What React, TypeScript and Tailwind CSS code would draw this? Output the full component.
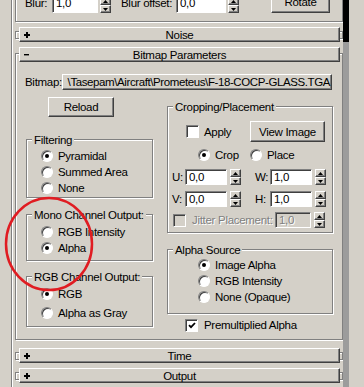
import React from 'react';

const raised =
  'border border-t-white border-l-white border-r-[#404040] border-b-[#404040] shadow-[inset_-1px_-1px_0_#808080]';
const sunken =
  'border border-t-[#808080] border-l-[#808080] border-r-white border-b-white shadow-[inset_1px_1px_0_#404040]';
const etched = 'border border-[#808080] shadow-[inset_1px_1px_0_#fff,1px_1px_0_#fff]';
const disabledText = 'text-[#808080] [text-shadow:1px_1px_0_#fff]';

const Spinner = () => (
  <div className="flex flex-col w-[11px] h-[16px] shrink-0">
    <div className={`h-[8px] flex items-center justify-center bg-[#d4d0c8] ${raised}`}>
      <svg width="5" height="3" viewBox="0 0 5 3">
        <path d="M2.5 0L5 3H0Z" fill="#000" />
      </svg>
    </div>
    <div className={`h-[8px] flex items-center justify-center bg-[#d4d0c8] ${raised}`}>
      <svg width="5" height="3" viewBox="0 0 5 3">
        <path d="M0 0H5L2.5 3Z" fill="#000" />
      </svg>
    </div>
  </div>
);

const Field = ({
  value,
  w,
  h = 'h-[16px] items-center',
  disabled,
}: {
  value: string;
  w: string;
  h?: string;
  disabled?: boolean;
}) => (
  <div
    className={`${w} ${h} shrink-0 pl-[3px] flex whitespace-nowrap overflow-hidden ${sunken} ${
      disabled ? `bg-[#d4d0c8] ${disabledText}` : 'bg-white'
    }`}
  >
    {value}
  </div>
);

const Radio = ({ checked }: { checked?: boolean }) => (
  <span className="w-[12px] h-[12px] shrink-0 rounded-full bg-white flex items-center justify-center border border-t-[#808080] border-l-[#808080] border-r-white border-b-white shadow-[inset_1px_1px_0_#404040]">
    {checked && <span className="w-[4px] h-[4px] rounded-full bg-black" />}
  </span>
);

const RadioRow = ({ label, checked, className = '' }: { label: string; checked?: boolean; className?: string }) => (
  <div className={`flex items-center h-[16px] gap-[5px] ${className}`}>
    <Radio checked={checked} />
    <span className="whitespace-nowrap">{label}</span>
  </div>
);

const Check = ({ checked, disabled }: { checked?: boolean; disabled?: boolean }) => (
  <span
    className={`w-[13px] h-[13px] shrink-0 flex items-center justify-center ${sunken} ${
      disabled ? 'bg-[#d4d0c8]' : 'bg-white'
    }`}
  >
    {checked && (
      <svg width="8" height="7" viewBox="0 0 8 7">
        <path d="M1 3.2L3 5.2L7 1" stroke="#000" strokeWidth="1.8" fill="none" />
      </svg>
    )}
  </span>
);

const Button = ({ children, className = '' }: { children: React.ReactNode; className?: string }) => (
  <div className={`flex items-center justify-center shrink-0 bg-[#d4d0c8] whitespace-nowrap ${raised} ${className}`}>
    {children}
  </div>
);

const Group = ({ title, className = '', children }: { title: string; className?: string; children: React.ReactNode }) => (
  <div className={`${etched} ${className}`}>
    <div className="-mt-[7px] ml-[5px] w-fit px-[2px] bg-[#d4d0c8] whitespace-nowrap">{title}</div>
    {children}
  </div>
);

const Sign = ({ open }: { open?: boolean }) =>
  open ? (
    <svg width="6" height="6" viewBox="0 0 6 6">
      <rect x="0" y="2" width="5" height="1.4" fill="#000" />
    </svg>
  ) : (
    <svg width="6" height="6" viewBox="0 0 6 6">
      <rect x="2" y="0" width="2" height="6" fill="#000" />
      <rect x="0" y="2" width="6" height="2" fill="#000" />
    </svg>
  );

const Header = ({ title, open, className = '' }: { title: string; open?: boolean; className?: string }) => (
  <div
    className={`ml-[3px] mr-[2px] h-[15px] bg-[#d4d0c8] grid grid-cols-[24px_1fr_24px] items-center ${raised} ${className}`}
  >
    <span className="pl-[4px] flex items-center">
      <Sign open={open} />
    </span>
    <span className="text-center whitespace-nowrap">{title}</span>
    <span />
  </div>
);

const Collapsed = ({ title, className = '' }: { title: string; className?: string }) => (
  <div className={`ml-[3px] ${etched} ${className}`}>
    <Header title={title} className="-mt-[5px] -mb-[4px]" />
  </div>
);

export default function App() {
  return (
    <div className="relative w-[364px] h-[387px] overflow-hidden flex bg-[#d4d0c8] text-black font-['Liberation_Sans',Arial,sans-serif] text-[11.5px] tracking-[-0.3px] leading-[14px]">
      <div className="w-[12px] shrink-0 border-r border-[#808080] shadow-[1px_0_0_#fff]" />

      <div className="w-[331px] shrink-0 flex flex-col">
        {/* previous rollout, scrolled off */}
        <div className="ml-[3px] h-[22px] border-l border-r border-b border-[#808080] shadow-[inset_1px_0_0_#fff,1px_1px_0_#fff]">
          <div className="flex items-end h-[21px] -mt-[8px]">
            <span className="ml-[9px] w-[27px] mb-[3px]">Blur:</span>
            <Field value="1,0" w="w-[46px]" h="h-[19px] items-end pb-[2px]" />
            <div className="ml-[2px]">
              <Spinner />
            </div>
            <span className="ml-[10px] w-[55px] mb-[3px] whitespace-nowrap">Blur offset:</span>
            <Field value="0,0" w="w-[50px]" h="h-[19px] items-end pb-[2px]" />
            <div className="ml-[2px]">
              <Spinner />
            </div>
            <Button className="ml-[32px] w-[59px] h-[22px]">Rotate</Button>
          </div>
        </div>

        <Collapsed title="Noise" className="mt-[9px]" />

        {/* Bitmap Parameters */}
        <div className={`ml-[3px] mt-[14px] pb-[6px] ${etched}`}>
          <Header title="Bitmap Parameters" open className="-mt-[7px]" />

          <div className="flex items-center mt-[12px]">
            <span className="ml-[9px] w-[37px]">Bitmap:</span>
            <Button className="w-[270px] h-[16px] !justify-end overflow-hidden pr-[1px] tracking-[-0.4px]">
              \Tasepam\Aircraft\Prometeus\F-18-COCP-GLASS.TGA
            </Button>
          </div>

          <div className="flex">
            {/* left column */}
            <div className="ml-[10px] w-[127px] flex flex-col">
              <Button className="mt-[7px] ml-[22px] w-[66px] h-[20px]">Reload</Button>

              <Group title="Filtering" className="mt-[22px] pb-[1px]">
                <div className="pl-[14px] mt-[1px]">
                  <RadioRow label="Pyramidal" checked />
                  <RadioRow label="Summed Area" />
                  <RadioRow label="None" />
                </div>
              </Group>

              <Group title="Mono Channel Output:" className="mt-[16px] pb-[4px]">
                <div className="pl-[14px] mt-[2px]">
                  <RadioRow label="RGB Intensity" />
                  <RadioRow label="Alpha" checked />
                </div>
              </Group>

              <Group title="RGB Channel Output:" className="mt-[15px] pb-[5px]">
                <div className="pl-[14px] mt-[2px]">
                  <RadioRow label="RGB" checked />
                  <RadioRow label="Alpha as Gray" className="mt-[3px]" />
                </div>
              </Group>
            </div>

            {/* right column */}
            <div className="ml-[14px] w-[166px] flex flex-col">
              <Group title="Cropping/Placement" className="mt-[16px] pb-[4px]">
                <div className="flex items-center h-[21px] mt-[7px]">
                  <span className="ml-[18px]">
                    <Check />
                  </span>
                  <span className="ml-[5px]">Apply</span>
                  <Button className="ml-auto mr-[7px] w-[75px] h-[21px]">View Image</Button>
                </div>
                <div className="flex items-center mt-[5px]">
                  <RadioRow label="Crop" checked className="ml-[30px] w-[52px]" />
                  <RadioRow label="Place" />
                </div>
                <div className="flex items-center mt-[6px]">
                  <span className="ml-[4px] w-[13px]">U:</span>
                  <Field value="0,0" w="w-[42px]" />
                  <div className="ml-[3px]">
                    <Spinner />
                  </div>
                  <span className="ml-[14px] w-[15px]">W:</span>
                  <Field value="1,0" w="w-[42px]" />
                  <div className="ml-[3px]">
                    <Spinner />
                  </div>
                </div>
                <div className="flex items-center mt-[6px]">
                  <span className="ml-[4px] w-[13px]">V:</span>
                  <Field value="0,0" w="w-[42px]" />
                  <div className="ml-[3px]">
                    <Spinner />
                  </div>
                  <span className="ml-[14px] w-[15px]">H:</span>
                  <Field value="1,0" w="w-[42px]" />
                  <div className="ml-[3px]">
                    <Spinner />
                  </div>
                </div>
                <div className="flex items-center mt-[5px]">
                  <span className="ml-[5px]">
                    <Check disabled />
                  </span>
                  <span className={`ml-[6px] w-[83px] whitespace-nowrap ${disabledText}`}>Jitter Placement:</span>
                  <Field value="1,0" w="w-[36px]" disabled />
                  <div className="ml-[3px]">
                    <Spinner />
                  </div>
                </div>
              </Group>

              <Group title="Alpha Source" className="mt-[16px] pb-[8px]">
                <div className="pl-[30px]">
                  <RadioRow label="Image Alpha" checked />
                  <RadioRow label="RGB Intensity" />
                  <RadioRow label="None (Opaque)" />
                </div>
              </Group>

              <div className="flex items-center h-[16px] mt-[3px]">
                <span className="ml-[18px]">
                  <Check checked />
                </span>
                <span className="ml-[6px]">Premultiplied Alpha</span>
              </div>
            </div>
          </div>
        </div>

        <Collapsed title="Time" className="mt-[12px]" />
        <Collapsed title="Output" className="mt-[12px]" />
      </div>

      {/* scroll indicator */}
      <div className="w-[6px] shrink-0 flex flex-col">
        <div className="h-[42px] bg-black" />
        <div className="flex-1 bg-[#9c9c9c]" />
      </div>
      <div className="flex-1" />

      {/* red annotation circle */}
      <svg className="absolute left-0 top-0 pointer-events-none" width="364" height="387">
        <ellipse cx="49" cy="244" rx="43" ry="46" fill="none" stroke="#e01c22" strokeWidth="2.5" />
      </svg>
    </div>
  );
}
